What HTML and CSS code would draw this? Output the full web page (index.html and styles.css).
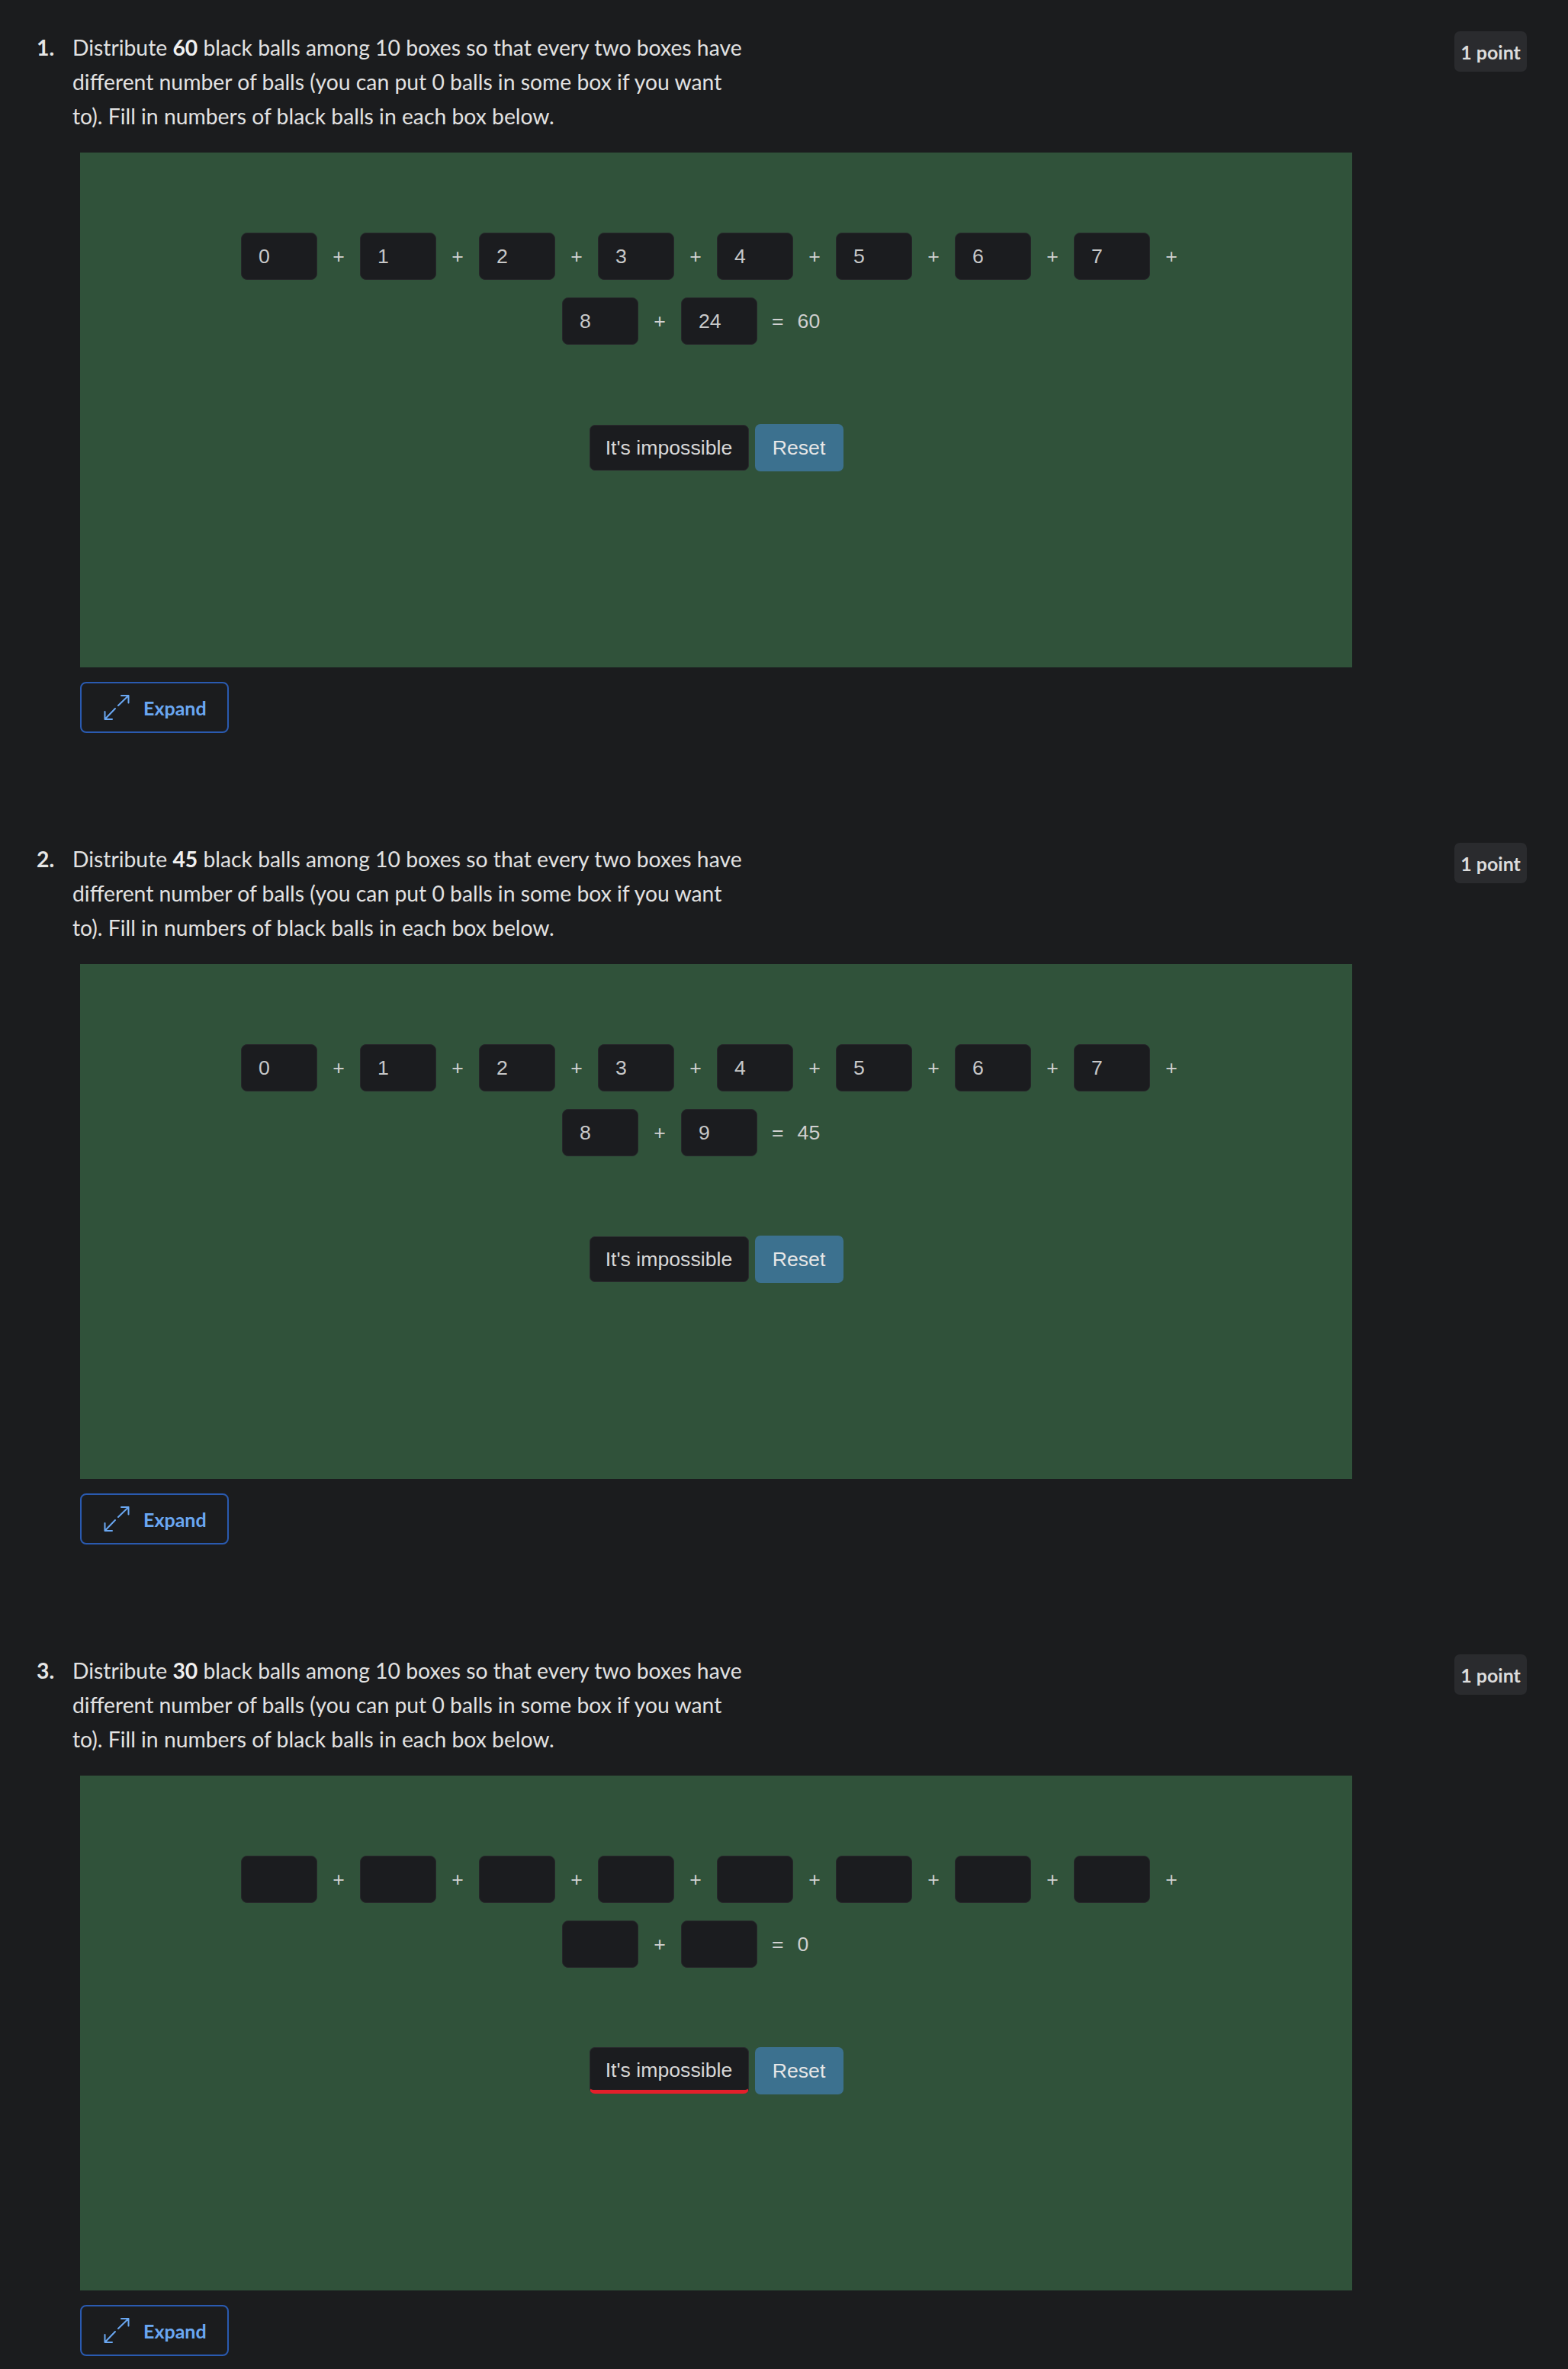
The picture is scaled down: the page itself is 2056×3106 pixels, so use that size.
FILE: index.html
```html
<!DOCTYPE html>
<html lang="en">
<head>
<meta charset="utf-8">
<title>Quiz</title>
<link rel="stylesheet" href="styles.css">
</head>
<body>
<main class="quiz">

  <section class="question">
    <div class="q-head">
      <div class="q-num">1.</div>
      <p class="q-text">Distribute <strong>60</strong> black balls among 10 boxes so that every two boxes have different number of balls (you can put 0 balls in some box if you want to). Fill in numbers of black balls in each box below.</p>
      <div class="q-points">1 point</div>
    </div>
    <div class="q-body">
      <div class="widget">
        <div class="row row-1">
          <span class="box">0</span><span class="op">+</span>
          <span class="box">1</span><span class="op">+</span>
          <span class="box">2</span><span class="op">+</span>
          <span class="box">3</span><span class="op">+</span>
          <span class="box">4</span><span class="op">+</span>
          <span class="box">5</span><span class="op">+</span>
          <span class="box">6</span><span class="op">+</span>
          <span class="box">7</span><span class="op">+</span>
        </div>
        <div class="row row-2">
          <span class="box">8</span><span class="op">+</span>
          <span class="box">24</span>
          <span class="eq">=</span><span class="sum">60</span>
        </div>
        <div class="actions">
          <button class="btn btn-impossible">It's impossible</button>
          <button class="btn btn-reset">Reset</button>
        </div>
      </div>
      <button class="expand">
        <svg class="expand-icon" width="34" height="34" viewBox="0 0 34 34" fill="none" stroke="currentColor" stroke-width="2" stroke-linecap="round" stroke-linejoin="round">
          <path d="M19 14 L32.5 1 M23 1 H32.5 V10.5"/>
          <path d="M15 18 L1.5 32 M1.5 22 V32 H11"/>
        </svg>
        <span>Expand</span>
      </button>
    </div>
  </section>

  <section class="question">
    <div class="q-head">
      <div class="q-num">2.</div>
      <p class="q-text">Distribute <strong>45</strong> black balls among 10 boxes so that every two boxes have different number of balls (you can put 0 balls in some box if you want to). Fill in numbers of black balls in each box below.</p>
      <div class="q-points">1 point</div>
    </div>
    <div class="q-body">
      <div class="widget">
        <div class="row row-1">
          <span class="box">0</span><span class="op">+</span>
          <span class="box">1</span><span class="op">+</span>
          <span class="box">2</span><span class="op">+</span>
          <span class="box">3</span><span class="op">+</span>
          <span class="box">4</span><span class="op">+</span>
          <span class="box">5</span><span class="op">+</span>
          <span class="box">6</span><span class="op">+</span>
          <span class="box">7</span><span class="op">+</span>
        </div>
        <div class="row row-2">
          <span class="box">8</span><span class="op">+</span>
          <span class="box">9</span>
          <span class="eq">=</span><span class="sum">45</span>
        </div>
        <div class="actions">
          <button class="btn btn-impossible">It's impossible</button>
          <button class="btn btn-reset">Reset</button>
        </div>
      </div>
      <button class="expand">
        <svg class="expand-icon" width="34" height="34" viewBox="0 0 34 34" fill="none" stroke="currentColor" stroke-width="2" stroke-linecap="round" stroke-linejoin="round">
          <path d="M19 14 L32.5 1 M23 1 H32.5 V10.5"/>
          <path d="M15 18 L1.5 32 M1.5 22 V32 H11"/>
        </svg>
        <span>Expand</span>
      </button>
    </div>
  </section>

  <section class="question">
    <div class="q-head">
      <div class="q-num">3.</div>
      <p class="q-text">Distribute <strong>30</strong> black balls among 10 boxes so that every two boxes have different number of balls (you can put 0 balls in some box if you want to). Fill in numbers of black balls in each box below.</p>
      <div class="q-points">1 point</div>
    </div>
    <div class="q-body">
      <div class="widget">
        <div class="row row-1">
          <span class="box"></span><span class="op">+</span>
          <span class="box"></span><span class="op">+</span>
          <span class="box"></span><span class="op">+</span>
          <span class="box"></span><span class="op">+</span>
          <span class="box"></span><span class="op">+</span>
          <span class="box"></span><span class="op">+</span>
          <span class="box"></span><span class="op">+</span>
          <span class="box"></span><span class="op">+</span>
        </div>
        <div class="row row-2">
          <span class="box"></span><span class="op">+</span>
          <span class="box"></span>
          <span class="eq">=</span><span class="sum">0</span>
        </div>
        <div class="actions">
          <button class="btn btn-impossible is-selected">It's impossible</button>
          <button class="btn btn-reset">Reset</button>
        </div>
      </div>
      <button class="expand">
        <svg class="expand-icon" width="34" height="34" viewBox="0 0 34 34" fill="none" stroke="currentColor" stroke-width="2" stroke-linecap="round" stroke-linejoin="round">
          <path d="M19 14 L32.5 1 M23 1 H32.5 V10.5"/>
          <path d="M15 18 L1.5 32 M1.5 22 V32 H11"/>
        </svg>
        <span>Expand</span>
      </button>
    </div>
  </section>

</main>
</body>
</html>
```

FILE: styles.css
```css
* {
  box-sizing: border-box;
}

html, body {
  margin: 0;
  padding: 0;
  background: #1b1c1e;
}

body {
  font-family: Lato, "Open Sans", sans-serif;
  color: #e2e2e2;
}

.quiz {
  display: flex;
  flex-direction: column;
}

.question {
  padding-top: 40px;
  padding-bottom: 103px;
}

.q-head {
  display: flex;
  align-items: flex-start;
  padding-left: 48px;
  padding-right: 54px;
}

.q-num {
  width: 47px;
  flex: none;
  font-size: 28.3px;
  line-height: 45px;
  font-weight: 700;
  color: #e6e6e6;
}

.q-text {
  margin: 0;
  width: 885px;
  font-size: 28.3px;
  line-height: 45px;
  color: #e2e2e2;
}

.q-text strong {
  font-weight: 700;
  color: #f0f0f0;
}

.q-points {
  margin-left: auto;
  margin-top: 1px;
  width: 95px;
  height: 53px;
  border-radius: 7px;
  background: #2a2b2e;
  color: #dcdcdc;
  font-size: 25px;
  font-weight: 700;
  display: flex;
  align-items: center;
  justify-content: center;
}

.q-body {
  padding-left: 105px;
  margin-top: 25px;
}

.widget {
  width: 1668px;
  height: 675px;
  background: #30523a;
  padding-top: 105px;
  font-family: "Liberation Sans", Arial, sans-serif;
  font-size: 26.67px;
  color: #cfcfcf;
}

.row {
  display: flex;
  align-items: center;
  height: 62px;
}

.row-1 {
  padding-left: 211px;
}

.row-2 {
  margin-top: 23px;
  padding-left: 632px;
}

.box {
  width: 100px;
  height: 62px;
  flex: none;
  background: #1b1c1f;
  border: 1px solid #26272a;
  border-radius: 8px;
  padding-left: 22px;
  display: flex;
  align-items: center;
  color: #c8c8c8;
}

.op {
  width: 56px;
  flex: none;
  text-align: center;
  color: #d2d2d2;
}

.eq {
  margin-left: 19px;
  color: #d2d2d2;
}

.sum {
  margin-left: 18px;
  color: #cfcfcf;
}

.actions {
  margin-top: 104px;
  display: flex;
  justify-content: center;
  align-items: center;
  gap: 8px;
}

.btn {
  font-family: "Liberation Sans", Arial, sans-serif;
  font-size: 26.67px;
  color: #d8d8d8;
  border-radius: 7px;
  cursor: pointer;
  display: flex;
  align-items: center;
  justify-content: center;
  padding: 0;
}

.btn-impossible {
  width: 209px;
  height: 60px;
  background: #1b1c1f;
  border: 1px solid #2a2b2e;
}

.btn-impossible.is-selected {
  height: 61px;
  margin-top: -1px;
  border-bottom: 5px solid #e41f2b;
  padding-top: 4px;
}

.btn-reset {
  width: 116px;
  height: 62px;
  background: #3c718f;
  border: none;
  color: #e6e6e6;
}

.expand {
  margin-top: 19px;
  width: 195px;
  height: 67px;
  background: transparent;
  border: 2px solid #2a5ab0;
  border-radius: 8px;
  padding: 0 0 0 29px;
  display: flex;
  align-items: center;
  gap: 18px;
  color: #6aa7f2;
  font-family: Lato, "Open Sans", sans-serif;
  font-size: 25px;
  font-weight: 700;
  cursor: pointer;
}

.expand-icon {
  flex: none;
  color: #6aa7f2;
}
```
